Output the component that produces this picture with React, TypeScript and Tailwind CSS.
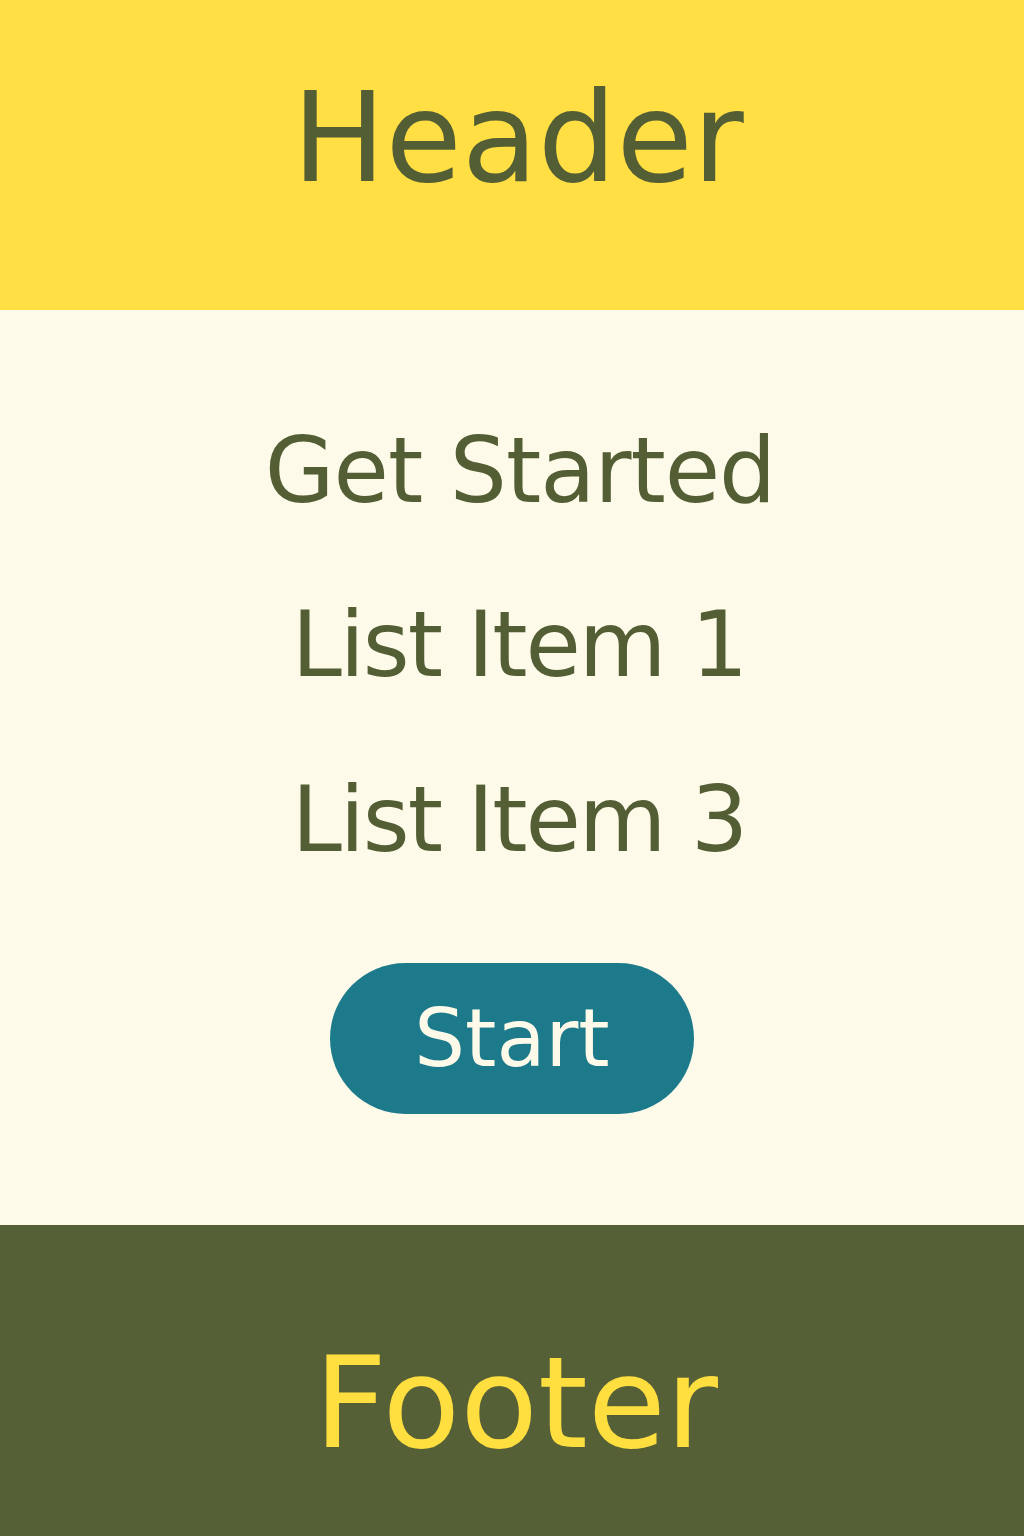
import React from 'react';

const font = { fontFamily: '"DejaVu Sans", "Liberation Sans", sans-serif' };

export default function App() {
    return (
        <div className="flex flex-col w-[1024px] h-[1536px]" style={font}>
            {/* Header */}
            <header className="h-[310px] bg-[#FFDF43] flex justify-center pt-[76px]">
                <h1 className="text-[124px] leading-none text-[#535E34] pl-[12px]">Header</h1>
            </header>

            {/* Main */}
            <main className="flex-1 bg-[#FEFAEA] flex flex-col items-center pt-[116px]">
                <h2 className="text-[90px] leading-none text-[#535E34] tracking-[-1px] pl-[16px]">Get Started</h2>
                <ul className="flex flex-col items-center mt-[84px] gap-[85px]">
                    <li className="text-[90px] leading-none text-[#535E34] tracking-[-2px] pl-[14px]">List Item 1</li>
                    <li className="text-[90px] leading-none text-[#535E34] tracking-[-2px] pl-[14px]">List Item 3</li>
                </ul>
                <button className="mt-[98px] w-[364px] h-[151px] rounded-full bg-[#1D7A8A] text-[#FEFAEA] text-[80px] leading-none flex items-center justify-center">
                    Start
                </button>
            </main>

            {/* Footer */}
            <footer className="h-[311px] bg-[#556036] flex justify-center pt-[115px]">
                <span className="text-[127px] leading-none text-[#FFDF3F] pl-[8px]">Footer</span>
            </footer>
        </div>
    );
}
